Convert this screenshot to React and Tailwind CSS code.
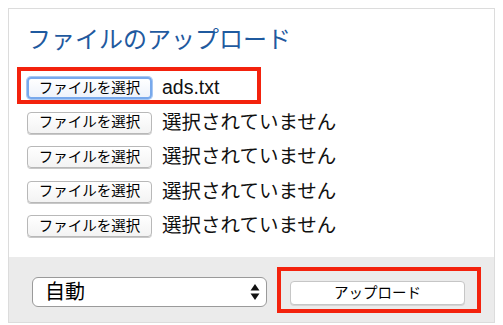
import React from "react";

const FONT = { fontFamily: '"Liberation Sans", "Noto Sans CJK JP", sans-serif' };

function FileButton({ focused }) {
  return (
    <div
      className={
        "h-[22px] w-[125px] flex items-center justify-center rounded-[4px] text-[14.5px] text-black leading-none " +
        (focused
          ? "border-[2px] border-[#78a9ec] bg-gradient-to-b from-[#ffffff] to-[#eef3fb] shadow-[0_0_0_1px_#a9c8f2]"
          : "border border-[#b8b8b8] bg-gradient-to-b from-[#ffffff] to-[#f3f3f3] shadow-[0_1px_0_#c8c8c8]")
      }
    >
      ファイルを選択
    </div>
  );
}

function Row({ label, focused }) {
  return (
    <div className="flex items-center h-[22px] gap-[10px]">
      <FileButton focused={focused} />
      <span className="text-[19.5px] text-[#111] leading-none">{label}</span>
    </div>
  );
}

export default function App() {
  return (
    <div className="relative w-[503px] h-[325px] bg-white pt-[8px] pl-[8px]" style={FONT}>
      <div className="w-[487px] h-[315px] border border-[#dcdcdc] flex flex-col">
        <div className="h-[248px] bg-white pl-[18px] pt-[15px]">
          <h1 className="text-[24px] leading-[32px] text-[#1f5a9f] font-normal">ファイルのアップロード</h1>
          <div className="mt-[21px] flex flex-col gap-[12.5px]">
            <Row label="ads.txt" focused />
            <Row label="選択されていません" />
            <Row label="選択されていません" />
            <Row label="選択されていません" />
            <Row label="選択されていません" />
          </div>
        </div>
        <div className="flex-1 bg-[#ebebeb] flex items-start pl-[23px] pt-[20px]">
          <div className="w-[235px] h-[30px] bg-white border border-[#9a9a9a] rounded-[6px] flex items-center justify-between pl-[12px] pr-[6px]">
            <span className="text-[20px] leading-none text-black">自動</span>
            <svg width="10" height="18" viewBox="0 0 10 18">
              <path d="M5 1 L9.5 7.5 L0.5 7.5 Z" fill="#111" />
              <path d="M5 17 L9.5 10.5 L0.5 10.5 Z" fill="#111" />
            </svg>
          </div>
          <div className="ml-[23px] mt-[4px] w-[175px] h-[24px] bg-white border border-[#c6c6c6] rounded-[4px] flex items-center justify-center text-[14.5px] text-black leading-none shadow-[0_1px_0_#d4d4d4]">
            アップロード
          </div>
        </div>
      </div>
      <div className="absolute left-[17px] top-[67px] w-[244px] h-[37px] border-[4px] border-[#f3220d]" />
      <div className="absolute left-[277px] top-[267px] w-[204px] h-[46px] border-[4px] border-[#f3220d]" />
    </div>
  );
}
